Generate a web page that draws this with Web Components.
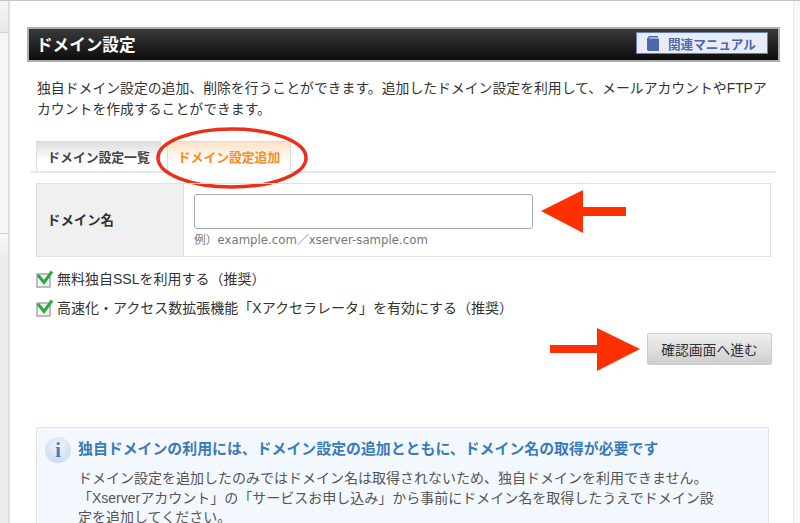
<!DOCTYPE html>
<html lang="ja">
<head>
<meta charset="utf-8">
<title>ドメイン設定</title>
<style>
  html, body { margin: 0; height: 100%; overflow: hidden; }
  body {
    font-family: "Liberation Sans", "Noto Sans CJK JP", sans-serif;
    color: #333;
  }
</style>
</head>
<body>
<domain-page>
  <section-head slot="head">ドメイン設定</section-head>
  <p slot="lead">独自ドメイン設定の追加、削除を行うことができます。追加したドメイン設定を利用して、メールアカウントやFTPア<br>カウントを作成することができます。</p>
  <domain-tabs slot="tabs"></domain-tabs>
  <domain-form slot="form"></domain-form>
  <info-box slot="info" heading="独自ドメインの利用には、ドメイン設定の追加とともに、ドメイン名の取得が必要です">
    ドメイン設定を追加したのみではドメイン名は取得されないため、独自ドメインを利用できません。<br>「Xserverアカウント」の「サービスお申し込み」から事前にドメイン名を取得したうえでドメイン設<br>定を追加してください。
  </info-box>
</domain-page>

<script>
class DomainPage extends HTMLElement {
  connectedCallback() {
    this.attachShadow({ mode: 'open' });
    this.shadowRoot.innerHTML = `
      <style>
        :host {
          display: grid;
          grid-template-columns: 10px 1fr 7px;
          height: 523px;
          background: #f7f7f7;
          border-top: 1px solid #c4c4c4;
          box-sizing: border-box;
        }
        .side {
          border-right: 2px solid #dedede;
          background: linear-gradient(#f6f6f6, #e8e8e8 31px, #d2d2d2 31px, #d2d2d2 32px, #f6f6f6 32px, #f6f6f6 232px, #d2d2d2 232px, #d2d2d2 233px, #f8f8f8 233px, #ececec 258px);
        }
        .main {
          background: #fff;
          padding: 26px 13px 0 17px;
          min-width: 0;
          overflow: hidden;
        }
        .right { background: #f8f8f8; border-left: 1px solid #ececec; }
        ::slotted(p) {
          margin: 16px 0 0 0;
          padding: 0 10px;
          font-size: 13.850px;
          line-height: 21px;
          color: #333;
        }
      </style>
      <div class="side"></div>
      <div class="main">
        <slot name="head"></slot>
        <slot name="lead"></slot>
        <slot name="tabs"></slot>
        <slot name="form"></slot>
        <slot name="info"></slot>
      </div>
      <div class="right"></div>
    `;
  }
}

class SectionHead extends HTMLElement {
  connectedCallback() {
    this.attachShadow({ mode: 'open' });
    this.shadowRoot.innerHTML = `
      <style>
        :host {
          display: flex;
          justify-content: space-between;
          align-items: center;
          height: 35px;
          box-sizing: border-box;
          background: linear-gradient(#3a3a3a, #0c0c0c);
          border: 2px solid #aeaeae;
          padding: 0 10px 0 7px;
          color: #fff;
        }
        h1 { margin: -2px 0 0; font-size: 16.600px; font-weight: bold; }
        a {
          display: flex;
          align-items: center;
          gap: 9px;
          width: 132px;
          height: 22px;
          box-sizing: border-box;
          margin-top: -3px;
          padding-left: 10px;
          background: #e8ecf7;
          border: 1px solid #6580c2;
          color: #4c69b0;
          font-size: 12.600px;
          font-weight: bold;
        }
        svg { display: block; }
      </style>
      <h1><slot></slot></h1>
      <a>
        <svg width="12" height="15" viewBox="0 0 12 15"><path d="M0 2.500 2 0h9v1.500H2.500L1.500 2.500H12V15H1.500L0 14z" fill="#4c69b0"/></svg>
        関連マニュアル
      </a>
    `;
  }
}

class DomainTabs extends HTMLElement {
  connectedCallback() {
    this.attachShadow({ mode: 'open' });
    this.shadowRoot.innerHTML = `
      <style>
        :host {
          display: flex;
          position: relative;
          gap: 6px;
          margin: 21px 4px 0;
          padding-left: 5px;
          height: 32px;
          box-sizing: border-box;
          border-bottom: 2px solid #e6e6e6;
          font-size: 12.800px;
          font-weight: bold;
        }
        div {
          display: flex;
          align-items: center;
          justify-content: center;
          height: 30px;
          box-sizing: border-box;
          border: 1px solid #ddd;
          border-bottom: 0;
        }
        .off { width: 125px; color: #444; background: linear-gradient(#dedede, #fff 65%); }
        .on { width: 124px; color: #f68a23; background: linear-gradient(#ffe2c4, #fff 65%); height: 32px; padding-bottom: 2px; }
        svg { position: absolute; left: 124px; top: -14px; }
      </style>
      <div class="off">ドメイン設定一覧</div>
      <div class="on">ドメイン設定追加</div>
      <svg width="154" height="62" viewBox="0 0 154 62"><ellipse cx="77" cy="31" rx="74" ry="29" fill="none" stroke="#e8301a" stroke-width="3.500"/></svg>
    `;
  }
}

class CheckRow extends HTMLElement {
  connectedCallback() {
    this.attachShadow({ mode: 'open' });
    this.shadowRoot.innerHTML = `
      <style>
        :host { display: flex; align-items: center; gap: 4px; height: 20px; font-size: 14px; color: #333; }
        svg { display: block; flex: none; }
        span { margin-top: -2px; }
      </style>
      <svg width="17" height="18" viewBox="0 0 17 18">
        <rect x="1" y="4" width="13" height="13" fill="#f6f6f6" stroke="#a6a6a6" stroke-width="1.500"/>
        <path d="M2 5 8 12.500 16 1.500" fill="none" stroke="#2eaa3c" stroke-width="3"/>
      </svg>
      <span><slot></slot></span>
    `;
  }
}

class DomainForm extends HTMLElement {
  connectedCallback() {
    this.attachShadow({ mode: 'open' });
    this.shadowRoot.innerHTML = `
      <style>
        :host { display: block; position: relative; margin: 10px 9px 0; }
        .table {
          display: grid;
          grid-template-columns: 147px 1fr;
          height: 74px;
          box-sizing: border-box;
          border: 1px solid #e0e0e0;
        }
        .label {
          display: flex;
          align-items: center;
          padding: 0 0 2px 10px;
          background: #f0f0f0;
          border-right: 1px solid #ddd;
          font-size: 13.400px;
          font-weight: bold;
          color: #333;
        }
        .cell { padding: 10px 0 0 10px; }
        .input {
          width: 339px;
          height: 35px;
          box-sizing: border-box;
          border: 1px solid #aaa;
          border-radius: 3px;
          background: #fff;
        }
        .hint { margin-top: 1px; font: 11.750px "DejaVu Sans", "Noto Sans CJK JP", sans-serif; color: #777; }
        .checks { display: flex; flex-direction: column; gap: 9px; margin-top: 12px; }
        .actions { display: flex; justify-content: flex-end; margin: 15px -1px 0 0; }
        button {
          width: 125px;
          height: 32px;
          border: 1px solid #ccc;
          border-radius: 2px;
          background: linear-gradient(#efefef, #cfcfcf);
          font: 13.800px "Liberation Sans", "Noto Sans CJK JP", sans-serif;
          color: #333;
          padding: 0;
        }
        svg { position: absolute; }
        .a1 { left: 505px; top: 7px; }
        .a2 { left: 514px; top: 145px; }
      </style>
      <div class="table">
        <div class="label">ドメイン名</div>
        <div class="cell">
          <div class="input"></div>
          <div class="hint">例）example.com／xserver-sample.com</div>
        </div>
      </div>
      <div class="checks">
        <check-row>無料独自SSLを利用する（推奨）</check-row>
        <check-row>高速化・アクセス数拡張機能「Xアクセラレータ」を有効にする（推奨）</check-row>
      </div>
      <div class="actions"><button>確認画面へ進む</button></div>
      <svg class="a1" width="86" height="44" viewBox="0 0 86 44"><path d="M0 21 42 0V17H85V26H42V43z" fill="#ff3000"/></svg>
      <svg class="a2" width="90" height="44" viewBox="0 0 90 44"><path d="M90 21 47 0V17H0V25H47V43z" fill="#ff3000"/></svg>
    `;
  }
}

class InfoBox extends HTMLElement {
  connectedCallback() {
    this.attachShadow({ mode: 'open' });
    const heading = this.getAttribute('heading');
    this.shadowRoot.innerHTML = `
      <style>
        :host {
          display: grid;
          grid-template-columns: 26px 1fr;
          align-content: start;
          column-gap: 7px;
          margin: 62px 11px 0 9px;
          padding: 9px 10px 0 8px;
          height: 140px;
          box-sizing: border-box;
          background: #f3f8ff;
          border: 1px solid #dde3ea;
        }
        .icon {
          width: 26px;
          height: 26px;
          border-radius: 50%;
          background: radial-gradient(circle at 50% 35%, #eef3fb, #c5d6ee);
          color: #4a77b5;
          font: bold 20px/26px "Liberation Serif", serif;
          text-align: center;
        }
        h2 { margin: 0; font-size: 14.900px; line-height: 24px; font-weight: bold; color: #3b7ab8; white-space: nowrap; }
        .body { grid-column: 2; margin-top: 6px; font-size: 14px; line-height: 19.500px; color: #555; white-space: nowrap; }
      </style>
      <div class="icon">i</div>
      <h2>${heading}</h2>
      <div class="body"><slot></slot></div>
    `;
  }
}

customElements.define('domain-page', DomainPage);
customElements.define('section-head', SectionHead);
customElements.define('domain-tabs', DomainTabs);
customElements.define('check-row', CheckRow);
customElements.define('domain-form', DomainForm);
customElements.define('info-box', InfoBox);
</script>
</body>
</html>
